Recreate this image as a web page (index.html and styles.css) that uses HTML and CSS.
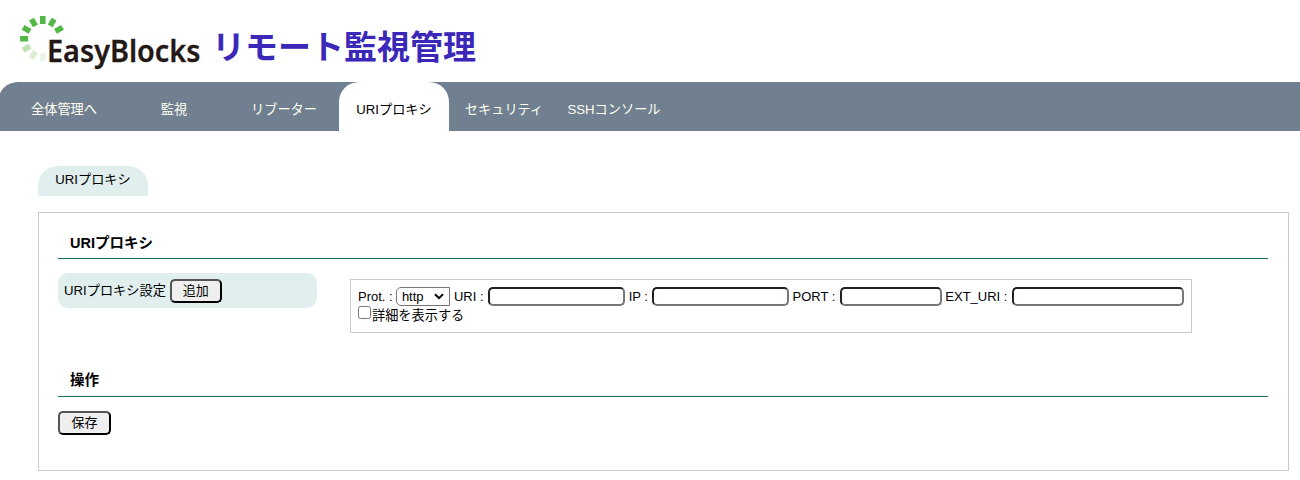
FILE: index.html
```html
<!DOCTYPE html>
<html lang="ja">
<head>
<meta charset="utf-8">
<title>EasyBlocks リモート監視管理</title>
<link rel="stylesheet" href="styles.css">
</head>
<body>
<header class="header">
  <svg class="logo" width="500" height="82" viewBox="0 0 500 82" role="img" aria-label="EasyBlocks リモート監視管理">
    <g fill="#54b848">
      <rect x="40" y="16" width="5.6" height="8"/>
      <rect x="40" y="16" width="5.6" height="8" transform="rotate(30 42.8 38.7)"/>
      <rect x="40" y="16" width="5.6" height="8" transform="rotate(60 42.8 38.7)"/>
      <rect x="40" y="16" width="5.6" height="8" transform="rotate(-30 42.8 38.7)"/>
      <rect x="40" y="16" width="5.6" height="8" transform="rotate(-60 42.8 38.7)"/>
      <rect x="40" y="16" width="5.6" height="8" transform="rotate(-90 42.8 38.7)"/>
      <rect x="40" y="16" width="5.6" height="8" fill="#bfe0b3" transform="rotate(-120 42.8 38.7)"/>
      <rect x="40" y="16" width="5.6" height="8" fill="#dceed6" transform="rotate(-150 42.8 38.7)"/>
      <rect x="40" y="16" width="5.6" height="8" fill="#e9f5e5" transform="rotate(180 42.8 38.7)"/>
    </g>
    <text class="brand" x="47" y="62" textLength="153.5" lengthAdjust="spacingAndGlyphs">EasyBlocks</text>
    <text class="product" x="212" y="59" textLength="264" lengthAdjust="spacingAndGlyphs">リモート監視管理</text>
  </svg>
</header>
<nav class="nav">
  <a class="nav-item">全体管理へ</a>
  <a class="nav-item">監視</a>
  <a class="nav-item">リブーター</a>
  <a class="nav-item active">URIプロキシ</a>
  <a class="nav-item">セキュリティ</a>
  <a class="nav-item">SSHコンソール</a>
</nav>
<main class="main">
  <div class="tab">URIプロキシ</div>
  <section class="panel">
    <h2 class="heading">URIプロキシ</h2>
    <div class="setting">
      <div class="setting-label"><span>URIプロキシ設定</span><button class="button">追加</button></div>
      <div class="form">
        <div class="fields">
          <label class="field prot"><span>Prot. :</span>
            <span class="select">http<svg class="arrow" width="10" height="7" viewBox="0 0 10 7"><path d="M1 1.2 5 5.2 9 1.2" fill="none" stroke="#000" stroke-width="2"/></svg></span></label>
          <label class="field uri"><span>URI :</span><input class="input" type="text"></label>
          <label class="field ip"><span>IP :</span><input class="input" type="text"></label>
          <label class="field port"><span>PORT :</span><input class="input" type="text"></label>
          <label class="field ext"><span>EXT_URI :</span><input class="input" type="text"></label>
        </div>
        <label class="detail"><input class="check" type="checkbox"><span>詳細を表示する</span></label>
      </div>
    </div>
    <h2 class="heading operation">操作</h2>
    <button class="button save">保存</button>
  </section>
</main>
</body>
</html>
```
FILE: styles.css
```css
* { box-sizing: border-box; }

body {
  margin: 0;
  height: 480px;
  overflow: hidden;
  background: #fff;
  color: #000;
  font: 13.2px/18px "Liberation Sans", "Noto Sans CJK JP", sans-serif;
}

.header { height: 82px; }
.logo { display: block; }
.brand {
  font: 600 31px "Noto Sans", "Open Sans", sans-serif;
  fill: #231815;
  stroke: #231815;
  stroke-width: 0.3px;
}
.product { font: 700 33px "Noto Sans CJK JP", sans-serif; fill: #3c28b8; }

.nav {
  display: flex;
  height: 49px;
  margin: 0 -20px 0 -2px;
  padding-left: 11px;
  border-radius: 20px 0 0 0;
  background: #708090;
}
.nav-item {
  width: 110px;
  line-height: 55px;
  text-align: center;
  white-space: nowrap;
  color: #fffff0;
}
.nav-item.active {
  border-radius: 20px 20px 0 0;
  background: #fff;
  color: #000;
}

.main { padding: 35px 11px 0 38px; }
.tab {
  width: 110px;
  height: 30px;
  border-radius: 20px 20px 0 0;
  background: #e0eeee;
  line-height: 27px;
  text-align: center;
}
.panel {
  height: 259px;
  margin-top: 16px;
  padding: 15px 20px 0 19px;
  border: 1px solid #ccc;
}
.heading {
  height: 31px;
  margin: 0;
  padding-left: 12px;
  border-bottom: 1px solid #1f6b63;
  font-size: 14.5px;
  line-height: 30px;
}

.setting { display: flex; align-items: flex-start; margin-top: 14px; }
.setting-label {
  display: flex;
  align-items: center;
  gap: 4px;
  width: 259px;
  height: 35px;
  padding-left: 6px;
  border-radius: 10px;
  background: #e0eeee;
}
.button {
  width: 52px;
  height: 24px;
  padding: 0;
  border: 2px outset #000;
  border-radius: 5px;
  background: #efefef;
  color: #000;
  font: inherit;
  font-size: 13px;
  line-height: 18px;
}
.form {
  width: 842px;
  height: 54px;
  margin: 6px 0 0 33px;
  padding: 7px 7px 0;
  border: 1px solid #ccc;
}
.fields { display: flex; gap: 4px; height: 19px; font-size: 13px; }
.field {
  display: flex;
  justify-content: space-between;
  align-items: center;
  height: 19px;
  white-space: nowrap;
}
.prot { width: 92px; }
.uri { width: 171px; }
.ip { width: 161px; }
.port { width: 150px; margin-left: -1px; }
.ext { width: 239px; margin-left: -1px; }
.select {
  display: flex;
  justify-content: space-between;
  align-items: center;
  width: 54px;
  height: 19px;
  padding: 0 5px;
  border: 1px solid #767676;
  border-radius: 5px 0 0 5px;
  background: #fff;
}
.input {
  width: 137px;
  height: 19px;
  margin: 0;
  border: 2px inset #767676;
  border-radius: 5px;
  background: #fff;
}
.port .input { width: 102px; }
.ext .input { width: 172px; }
.detail { display: flex; align-items: center; height: 18px; }
.detail span { padding-top: 2px; }
.check { width: 13px; height: 13px; margin: 0 1px 5px 0; }

.operation { margin-top: 33px; line-height: 28px; }
.save { display: block; width: 53px; margin-top: 14px; }
```
